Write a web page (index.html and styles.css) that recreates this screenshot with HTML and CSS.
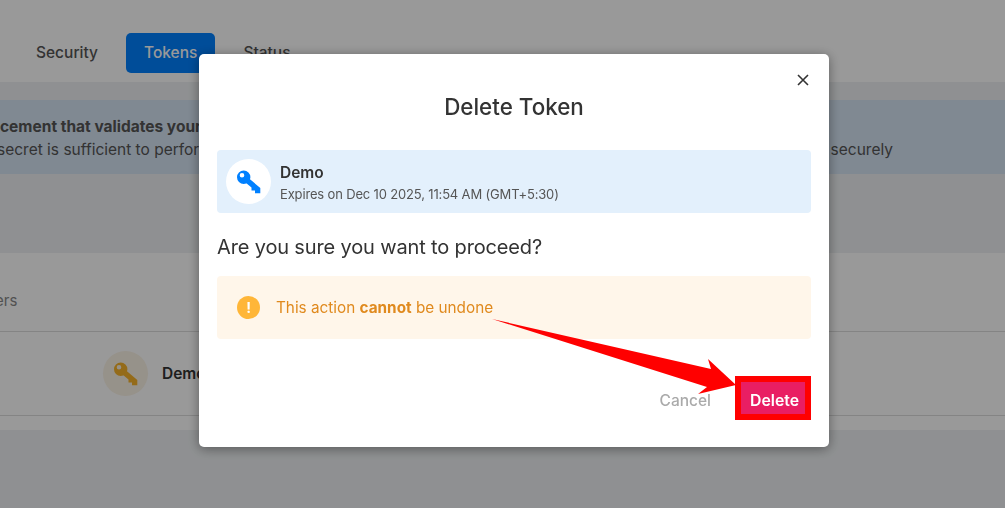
FILE: index.html
```html
<!DOCTYPE html>
<html lang="en">
<head>
    <meta charset="UTF-8">
    <meta name="viewport" content="width=device-width, initial-scale=1.0">
    <title>Delete Token</title>
    <link rel="stylesheet" href="styles.css">
</head>
<body>
    <div class="tabs">
        <a class="tab">Security</a>
        <a class="tab active">Tokens</a>
        <a class="tab">Status</a>
    </div>

    <div class="content">
        <div class="notice">
            <div class="notice-title">cement that validates your</div>
            <div class="notice-text">
                <span>secret is sufficient to perform</span>
                <span>securely</span>
            </div>
        </div>

        <div class="card">
            <div class="card-head">ers</div>
            <div class="card-row">
                <div class="row-icon">
                    <svg class="key" viewBox="0 0 24 24">
                        <path fill-rule="evenodd" d="M6.7 .6a6.7 6.7 0 1 1 0 13.4a6.7 6.7 0 1 1 0-13.4zM5 2.9a2.3 2.3 0 1 0 0 4.6a2.3 2.3 0 0 0 0-4.6z"/>
                        <path d="M11.5 8L23.3 18V23.3H18V20.5H14.5V17.5L8.5 12.5z"/>
                    </svg>
                </div>
                <span class="row-name">Demo</span>
            </div>
        </div>
    </div>

    <div class="overlay">
        <div class="modal">
            <button class="close" aria-label="Close">
                <svg viewBox="0 0 12 12"><path d="M1 1l10 10M11 1L1 11"/></svg>
            </button>
            <h2 class="modal-title">Delete Token</h2>

            <div class="token-box">
                <div class="token-icon">
                    <svg class="key" viewBox="0 0 24 24">
                        <path fill-rule="evenodd" d="M6.7 .6a6.7 6.7 0 1 1 0 13.4a6.7 6.7 0 1 1 0-13.4zM5 2.9a2.3 2.3 0 1 0 0 4.6a2.3 2.3 0 0 0 0-4.6z"/>
                        <path d="M11.5 8L23.3 18V23.3H18V20.5H14.5V17.5L8.5 12.5z"/>
                    </svg>
                </div>
                <div class="token-info">
                    <div class="token-name">Demo</div>
                    <div class="token-expiry">Expires on Dec 10 2025, 11:54 AM (GMT+5:30)</div>
                </div>
            </div>

            <p class="question">Are you sure you want to proceed?</p>

            <div class="warning">
                <span class="warning-icon">!</span>
                <span>This action <b>cannot</b> be undone</span>
            </div>

            <div class="actions">
                <button class="btn-cancel">Cancel</button>
                <button class="btn-delete">Delete</button>
            </div>
        </div>

        <!-- red annotation arrow from the screenshot -->
        <svg class="arrow" viewBox="0 0 1005 508"><polygon points="492,319 711,369 708,359 736,385 698,394 707,387"/></svg>
    </div>
</body>
</html>
```

FILE: styles.css
```css
* {
    box-sizing: border-box;
}
body {
    margin: 0;
    height: 508px;
    overflow: hidden;
    font-family: 'Inter', 'Liberation Sans', sans-serif;
    background-color: #eef1f3;
    color: #333;
}
.tabs {
    height: 82px;
    background-color: #fff;
    padding: 33px 0 0 18px;
    display: flex;
    gap: 10px;
    align-items: flex-start;
}
.tab {
    height: 40px;
    padding: 0 18px;
    border-radius: 5px;
    font-size: 15.5px;
    font-weight: 500;
    line-height: 39px;
    color: #555;
}
.tab.active {
    background-color: #0080ff;
    color: #fff;
}
.content {
    padding-top: 18px;
}
.notice {
    height: 74px;
    background-color: #d5e4f3;
    padding: 15px 112px 0 0;
    font-size: 15.5px;
    line-height: 23px;
    color: #555;
    margin-bottom: 79px;
}
.notice-title {
    font-weight: 700;
}
.notice-text {
    display: flex;
    justify-content: space-between;
    margin-left: -3px;
}
.card {
    height: 177px;
    background-color: #fff;
}
.card-head {
    height: 79px;
    padding: 38px 0 0;
    font-size: 15px;
    line-height: 20px;
    color: #888;
    text-indent: -5px;
    border-bottom: 1px solid #ddd;
}
.card-row {
    height: 84px;
    padding-left: 103px;
    display: flex;
    align-items: center;
    gap: 14px;
    border-bottom: 1px solid #ddd;
}
.row-icon {
    width: 45px;
    height: 45px;
    border-radius: 50%;
    background-color: #fbf3e6;
    display: flex;
    align-items: center;
    justify-content: center;
    color: #f7b32b;
}
.row-name {
    font-size: 15.5px;
    font-weight: 600;
}
.key {
    width: 24px;
    height: 24px;
    fill: currentColor;
}
.overlay {
    position: fixed;
    inset: 0;
    background-color: rgba(0, 0, 0, 0.4);
    padding: 54px 0 0 199px;
}
.modal {
    position: relative;
    width: 630px;
    height: 393px;
    background-color: #fff;
    border-radius: 5px;
    padding: 38px 18px 27px;
    box-shadow: 0 2px 12px rgba(0, 0, 0, 0.4);
    display: flex;
    flex-direction: column;
}
.close {
    position: absolute;
    top: 20px;
    right: 20px;
    width: 12px;
    height: 12px;
    padding: 0;
    border: none;
    background: none;
}
.close svg {
    display: block;
    stroke: #333;
    stroke-width: 1.6;
    fill: none;
}
.modal-title {
    margin: 0 0 28px;
    font-size: 22.4px;
    font-weight: 500;
    line-height: 30px;
    text-align: center;
    color: #333;
}
.token-box {
    height: 63px;
    background-color: #e3f0fc;
    border-radius: 4px;
    padding-left: 9px;
    display: flex;
    align-items: center;
    gap: 9px;
}
.token-icon {
    width: 45px;
    height: 45px;
    border-radius: 50%;
    background-color: #fff;
    display: flex;
    align-items: center;
    justify-content: center;
    color: #0080ff;
}
.token-info {
    padding-top: 2px;
}
.token-name {
    font-size: 15.5px;
    font-weight: 600;
    line-height: 22px;
}
.token-expiry {
    font-size: 13px;
    letter-spacing: -0.16px;
    line-height: 20px;
    color: #555;
}
.question {
    margin: 0;
    height: 63px;
    font-size: 20px;
    letter-spacing: -0.15px;
    line-height: 68px;
    color: #333;
}
.warning {
    height: 63px;
    background-color: #fff6ea;
    border-radius: 4px;
    padding-left: 20px;
    display: flex;
    align-items: center;
    gap: 16px;
    font-size: 15.3px;
    color: #e08a1e;
}
.warning-icon {
    width: 23px;
    height: 23px;
    border-radius: 50%;
    background-color: #ffb638;
    color: #fff;
    font-weight: 700;
    font-size: 14px;
    text-align: center;
    line-height: 23px;
}
.actions {
    margin-top: auto;
    display: flex;
    justify-content: flex-end;
    align-items: center;
    gap: 24px;
}
.btn-cancel {
    padding: 4px 0 0;
    border: none;
    background: none;
    font: inherit;
    font-size: 15.5px;
    font-weight: 500;
    color: #aaa;
}
.btn-delete {
    width: 76px;
    height: 44px;
    border: 6px solid #ff0000;
    background-color: #e91e63;
    color: #fff;
    font: inherit;
    font-size: 15.8px;
    font-weight: 600;
    padding: 4px 0 0 3px;
}
.arrow {
    position: absolute;
    inset: 0;
    width: 1005px;
    height: 508px;
    fill: #ff0000;
}
```
